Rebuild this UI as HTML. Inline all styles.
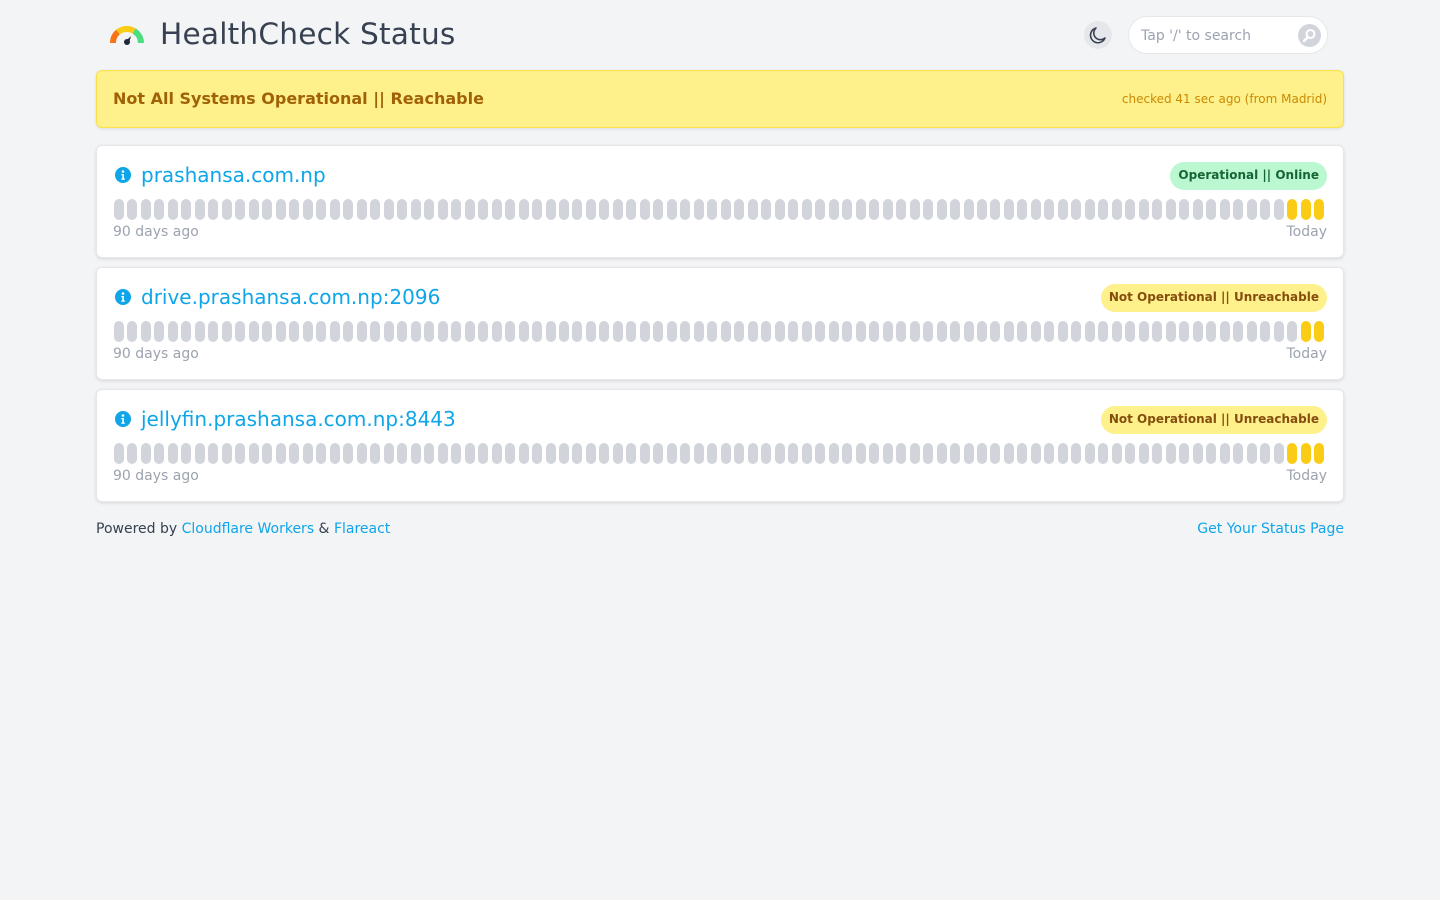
<!DOCTYPE html>
<html><head><meta charset="utf-8">
<style>
*{box-sizing:border-box;margin:0;padding:0}
body{width:1440px;height:900px;background:#f3f4f6;font-family:"DejaVu Sans","Liberation Sans",sans-serif;color:#374151}
.wrap{width:1248px;margin:0 auto;position:relative}
header{height:70px;position:relative}
.logo{position:absolute;left:14px;top:23px}
h1{position:absolute;left:64px;top:17px;font-size:29.6px;font-weight:400;color:#374151;letter-spacing:0.2px}
.moon{position:absolute;left:988px;top:21px;width:28px;height:28px;border-radius:50%;background:#e5e7eb}
.search{position:absolute;left:1032px;top:16px;width:200px;height:38px;border-radius:19px;background:#fff;border:1px solid #e5e7eb;font-size:14px;color:#9ca3af;padding:11px 0 0 12px}
.sbtn{position:absolute;right:6px;top:7px;width:23px;height:23px;border-radius:50%;background:#d1d5db}
.banner{height:58px;background:#fef08a;border:1px solid #fde047;border-radius:6px;box-shadow:0 1px 3px rgba(0,0,0,.1);position:relative}
.banner b{position:absolute;left:16px;top:18px;font-size:16px;color:#a16207}
.banner span{position:absolute;right:16px;top:21px;font-size:12px;color:#ca8a04}
.card{height:113px;background:#fff;border:1px solid #e5e7eb;border-radius:6px;box-shadow:0 1px 3px rgba(0,0,0,.12);position:relative;margin-top:17px}
.card+.card{margin-top:9px}
.info{position:absolute;left:18px;top:21px}
.name{position:absolute;left:44px;top:17px;font-size:20px;color:#0ea5e9}
.badge{position:absolute;right:16px;top:16px;height:28px;border-radius:14px;font-size:12px;font-weight:bold;padding:6px 8px 0}
.ok{background:#bbf7d0;color:#166534}
.bad{background:#fef08a;color:#854d0e}
.bars{position:absolute;left:17px;right:18px;top:53px;height:21px;display:flex;justify-content:space-between}
.bars i{display:block;width:10px;height:21px;border-radius:5px;background:#d1d5db}
.bars i.y{background:#facc15}
.l,.r{position:absolute;top:78px;font-size:14px;color:#9ca3af}
.l{left:16px}.r{right:16px}
footer{margin-top:19px;font-size:14px;display:flex;justify-content:space-between;color:#374151}
footer a{color:#0ea5e9;text-decoration:none}
</style></head><body>
<div class="wrap">
<header>
<svg class="logo" width="34" height="22" viewBox="0 0 34 22">
<path d="M3 20 A14 14 0 0 1 8 9" stroke="#f97316" stroke-width="6" fill="none"/>
<path d="M8 9 A14 14 0 0 1 24 8" stroke="#facc15" stroke-width="6" fill="none"/>
<path d="M24 8 A14 14 0 0 1 31 20" stroke="#4ade80" stroke-width="6" fill="none"/>
<circle cx="17" cy="19" r="3" fill="#1f2937"/><path d="M16 18 L21 13 L19 20Z" fill="#1f2937"/>
</svg>
<h1>HealthCheck Status</h1>
<div class="moon"><svg width="28" height="28" viewBox="0 0 28 28"><path d="M12 7 A7.5 7.5 0 1 0 21 17 A6 6 0 0 1 12 7Z" fill="none" stroke="#374151" stroke-width="1.6" stroke-linejoin="round"/></svg></div>
<div class="search">Tap '/' to search<div class="sbtn"><svg width="23" height="23" viewBox="0 0 23 23"><circle cx="12.5" cy="10" r="4" fill="none" stroke="#fff" stroke-width="2"/><path d="M10 13 L6 17" stroke="#fff" stroke-width="2.4" stroke-linecap="round"/></svg></div></div>
</header>
<div class="banner"><b>Not All Systems Operational || Reachable</b><span>checked 41 sec ago (from Madrid)</span></div>

<div class="card"><svg class="info" width="16" height="16" viewBox="0 0 16 16"><circle cx="8" cy="8" r="8" fill="#0ea5e9"/><circle cx="8" cy="4.5" r="1.3" fill="#fff"/><path d="M6.3 7h2.6v4.5h1v1.3H6.3v-1.3h1V8.3h-1z" fill="#fff"/></svg><div class="name">prashansa.com.np</div><div class="badge ok">Operational || Online</div><div class="bars" data-y="3"></div><div class="l">90 days ago</div><div class="r">Today</div></div>

<div class="card"><svg class="info" width="16" height="16" viewBox="0 0 16 16"><circle cx="8" cy="8" r="8" fill="#0ea5e9"/><circle cx="8" cy="4.5" r="1.3" fill="#fff"/><path d="M6.3 7h2.6v4.5h1v1.3H6.3v-1.3h1V8.3h-1z" fill="#fff"/></svg><div class="name">drive.prashansa.com.np:2096</div><div class="badge bad">Not Operational || Unreachable</div><div class="bars" data-y="2"></div><div class="l">90 days ago</div><div class="r">Today</div></div>

<div class="card"><svg class="info" width="16" height="16" viewBox="0 0 16 16"><circle cx="8" cy="8" r="8" fill="#0ea5e9"/><circle cx="8" cy="4.5" r="1.3" fill="#fff"/><path d="M6.3 7h2.6v4.5h1v1.3H6.3v-1.3h1V8.3h-1z" fill="#fff"/></svg><div class="name">jellyfin.prashansa.com.np:8443</div><div class="badge bad">Not Operational || Unreachable</div><div class="bars" data-y="3"></div><div class="l">90 days ago</div><div class="r">Today</div></div>

<footer><div>Powered by <a>Cloudflare Workers</a> &amp; <a>Flareact</a></div><a>Get Your Status Page</a></footer>
</div>
<script>
document.querySelectorAll('.bars').forEach(function(b){var y=+b.dataset.y,h='';for(var i=0;i<90;i++)h+='<i'+(i>=90-y?' class="y"':'')+'></i>';b.innerHTML=h;});
</script>
</body></html>
